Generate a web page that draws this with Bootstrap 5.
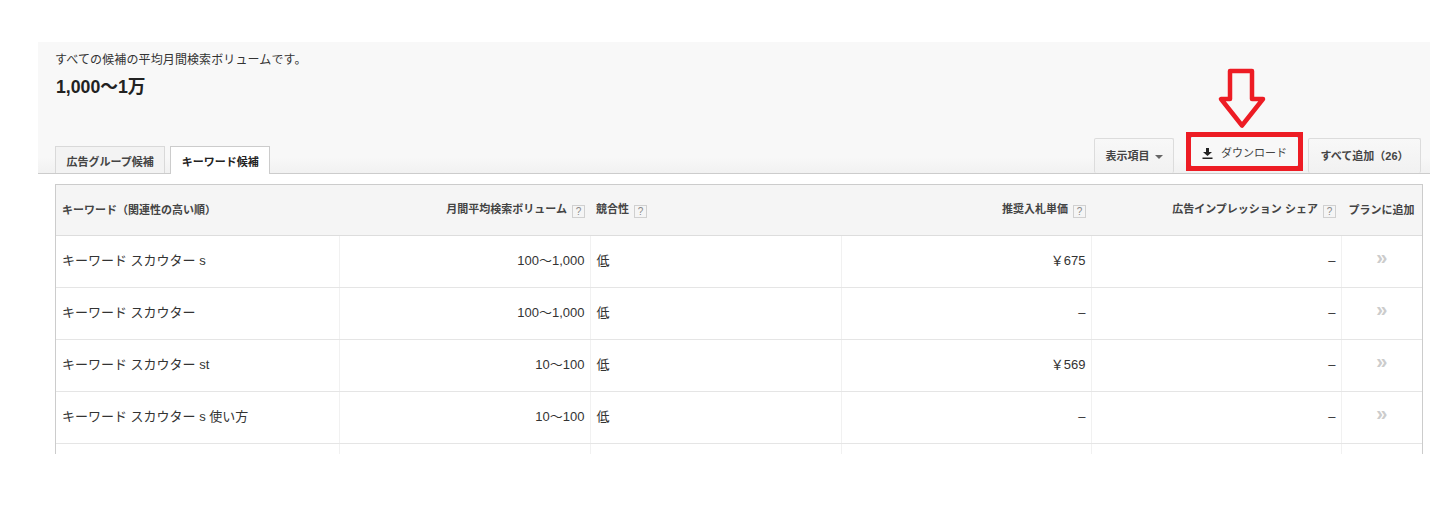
<!DOCTYPE html>
<html lang="ja">
<head>
  <meta charset="UTF-8">
  <title>キーワード候補</title>
  <link href="https://cdn.jsdelivr.net/npm/bootstrap@5.3.3/dist/css/bootstrap.min.css" rel="stylesheet"/>
  <style>
    html, body { height: 519px; overflow: hidden; }
    body { background: #fff; color: #333; font-family: "Liberation Sans", "Noto Sans CJK JP", sans-serif; font-size: 13px; }
    .page-wrap { padding: 42px 25px 0 38px; position: relative; }
    .head-panel { height: 132px; padding: 10px 9px 0 18px; background: linear-gradient(#f8f8f8 0, #f8f8f8 88%, #f1f1f1 100%); border-bottom: 1px solid #ccc; }
    .avg-label { font-size: 12px; line-height: 16px; letter-spacing: .12px; color: #333; margin-left: -1px; }
    .avg-value { font-size: 17.7px; font-weight: 700; line-height: 20px; margin-top: 9px; color: #222; }
    .tool-row { height: 62px; margin-left: -1px; }
    .kw-tab { display: block; height: 27px; padding: 0 10.5px; line-height: 31px; font-size: 11px; font-weight: 700; color: #444; background: #f3f3f3; border: 1px solid #d9d9d9; border-bottom: 0; }
    .kw-tab.on { height: 28px; margin-bottom: -1px; background: #fff; color: #222; border-color: #ccc; position: relative; }
    .tab-gap { gap: 5px; }
    .tool-btn { width: 80px; height: 35px; padding: 0; font-size: 11px; font-weight: 700; color: #444; background: linear-gradient(#f8f8f8, #f1f1f1); border: 1px solid #dcdcdc; border-bottom: 0; border-radius: 2px; white-space: nowrap; }
    .tool-btn.wide { width: 113px; }
    .tool-btn.dl { width: 109px; height: 31px; margin: 0 9px 6px 16px; padding-top: 3px; color: #444; font-weight: 400; background: #f8f8f8; border: 1px solid #4d90fe; }
    .caret-down { display: inline-block; margin-left: 2px; vertical-align: 1px; border: 4px solid transparent; border-top-color: #666; border-bottom: 0; }
    .table-clip { height: 270px; margin: 10px 7px 0 17px; overflow: hidden; border: solid #ccc; border-width: 1px 1px 0 1px; }
    .kw-table { table-layout: fixed; width: 100%; margin: 0; border-collapse: collapse; }
    .kw-table th { height: 50px; padding: 0 6px; font-size: 11px; font-weight: 700; color: #444; background: #f5f5f5; border-bottom: 1px solid #ddd; vertical-align: middle; white-space: nowrap; }
    .kw-table td { height: 52px; padding: 0 6px; font-size: 13px; color: #333; border-bottom: 1px solid #e5e5e5; border-left: 1px solid #f1f1f1; vertical-align: middle; white-space: nowrap; }
    .kw-table td:first-child { border-left: 0; }
    .kw-table .text-end { padding-right: 5px; }
    .help-box { display: inline-block; width: 13px; height: 13px; margin-left: 2px; font-size: 10px; font-weight: 400; line-height: 11px; text-align: center; vertical-align: -2px; color: #888; background: #f5f5f5; border: 1px solid #d0d0d0; }
    .add-mark { display: block; text-align: center; font-size: 20px; font-weight: 700; line-height: 18px; color: #ccc; margin-top: -8px; }
    .mark-box { position: absolute; left: 1186px; top: 132px; width: 117px; height: 39px; border: 5px solid #ed1c24; pointer-events: none; }
    .mark-arrow { position: absolute; left: 1217px; top: 68px; }
  </style>
</head>
<body>
  <div class="page-wrap">
    <div class="head-panel d-flex flex-column">
      <div class="avg-label">すべての候補の平均月間検索ボリュームです。</div>
      <div class="avg-value">1,000～1万</div>
      <div class="tool-row d-flex justify-content-between align-items-end mt-auto">
        <div class="d-flex tab-gap align-items-start">
          <span class="kw-tab">広告グループ候補</span>
          <span class="kw-tab on">キーワード候補</span>
        </div>
        <div class="d-flex align-items-end">
          <button class="tool-btn" type="button">表示項目 <span class="caret-down"></span></button>
          <button class="tool-btn dl" type="button">
            <svg width="11" height="11" viewBox="0 0 11 11" class="me-2"><path d="M4 0h3v4h3L5.500 8 1 4h3zM0.500 9.500h10v1.500h-10z" fill="#222"/></svg>ダウンロード
          </button>
          <button class="tool-btn wide" type="button">すべて追加（26）</button>
        </div>
      </div>
    </div>

    <div class="table-clip">
      <table class="kw-table">
        <colgroup>
          <col style="width:283px"><col style="width:251px"><col style="width:251px"><col style="width:250px"><col style="width:250px"><col>
        </colgroup>
        <thead>
          <tr>
            <th>キーワード（関連性の高い順）</th>
            <th class="text-end">月間平均検索ボリューム <span class="help-box">?</span></th>
            <th>競合性 <span class="help-box">?</span></th>
            <th class="text-end">推奨入札単価 <span class="help-box">?</span></th>
            <th class="text-end">広告インプレッション シェア <span class="help-box">?</span></th>
            <th class="text-center">プランに追加</th>
          </tr>
        </thead>
        <tbody id="kwRows"></tbody>
      </table>
    </div>

    <div class="mark-box"></div>
    <svg class="mark-arrow" width="50" height="62" viewBox="0 0 50 62">
      <path d="M13 3h22v28h11L25 57.500 4 31h9z" fill="none" stroke="#ed1c24" stroke-width="4.500" stroke-linejoin="round"/>
    </svg>
  </div>

  <script src="https://cdn.jsdelivr.net/npm/bootstrap@5.3.3/dist/js/bootstrap.bundle.min.js"></script>
  <script>
    const rows = [
      ['キーワード スカウター s', '100～1,000', '低', '￥675'],
      ['キーワード スカウター', '100～1,000', '低', '–'],
      ['キーワード スカウター st', '10～100', '低', '￥569'],
      ['キーワード スカウター s 使い方', '10～100', '低', '–'],
      ['', '', '', '']
    ];
    const kwRows = document.getElementById('kwRows');
    rows.forEach(r => {
      const tr = document.createElement('tr');
      tr.innerHTML = `<td>${r[0]}</td><td class="text-end">${r[1]}</td><td>${r[2]}</td>` +
        `<td class="text-end">${r[3]}</td><td class="text-end">${r[0] ? '–' : ''}</td>` +
        `<td>${r[0] ? '<span class="add-mark">»</span>' : ''}</td>`;
      kwRows.appendChild(tr);
    });
  </script>
</body>
</html>
